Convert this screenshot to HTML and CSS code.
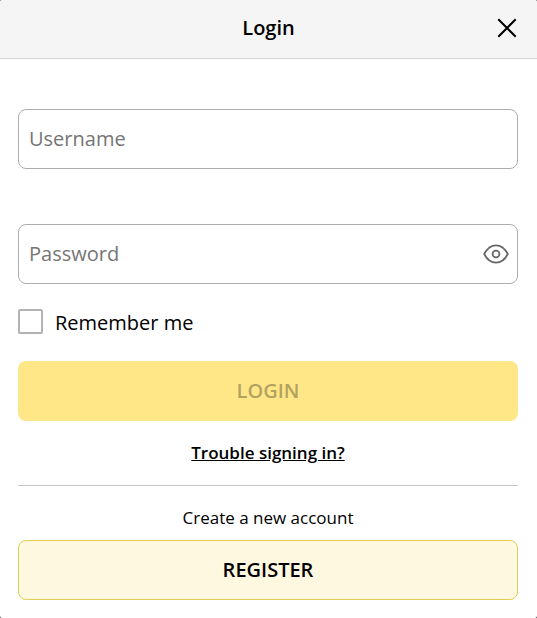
FILE: index.html
```html
<!DOCTYPE html>
<html lang="en">

<head>
  <meta charset="UTF-8">
  <meta name="viewport" content="width=device-width, initial-scale=1.0">
  <title>Login</title>
  <link rel="stylesheet" href="styles.css">
</head>

<body>
  <div class="modal">
    <!-- Header -->
    <header class="modal-header">
      <h1>Login</h1>
      <button class="close-modal" type="button" aria-label="Close">
        <svg width="20" height="20" viewBox="0 0 20 20" fill="none" stroke="#000000" stroke-width="2">
          <path d="M1.3 1.3 18.7 18.7M18.7 1.3 1.3 18.7" />
        </svg>
      </button>
    </header>

    <!-- Login form -->
    <form class="login-form" onsubmit="return false;">
      <div class="form-group">
        <input type="text" id="username" placeholder="Username" aria-label="Username">
      </div>
      <div class="form-group">
        <input type="password" id="password" placeholder="Password" aria-label="Password">
        <button class="toggle-password" type="button" aria-label="Show password">
          <svg width="26" height="20" viewBox="0 0 26 20" fill="none" stroke="#666666" stroke-width="1.8">
            <path d="M1.2 10C4.2 4.3 8.3 1.3 13 1.3S21.8 4.3 24.8 10C21.8 15.7 17.7 18.7 13 18.7S4.2 15.7 1.2 10Z" stroke-linejoin="round" />
            <circle cx="13" cy="10" r="3.4" />
          </svg>
        </button>
      </div>
      <div class="remember">
        <input type="checkbox" id="remember">
        <label for="remember">Remember me</label>
      </div>
      <button class="btn btn-login" type="submit" disabled>LOGIN</button>
      <a class="trouble" href="#">Trouble signing in?</a>
    </form>

    <!-- Register -->
    <div class="register">
      <p>Create a new account</p>
      <button class="btn btn-register" type="button">REGISTER</button>
    </div>
  </div>
</body>

</html>
```
FILE: styles.css
```css
* {
  box-sizing: border-box;
}

body {
  margin: 0;
  font-family: "Open Sans", "Noto Sans", sans-serif;
  color: #000000;
  background-color: #333333;
}

.modal {
  min-height: 100vh;
  background-color: #ffffff;
  border-radius: 2px;
  overflow: hidden;
}

/* Header */
.modal-header {
  position: relative;
  display: flex;
  justify-content: center;
  align-items: center;
  height: 59px;
  padding-bottom: 4px;
  background-color: #f5f5f5;
  border-bottom: 1px solid #d6d6d6;
}

.modal-header h1 {
  margin: 0;
  font-size: 20px;
  font-weight: 600;
}

.close-modal {
  position: absolute;
  top: 18px;
  right: 20px;
  display: flex;
  padding: 0;
  background: none;
  border: none;
  cursor: pointer;
}

/* Form */
.login-form {
  display: flex;
  flex-direction: column;
  margin: 0 19px 0 18px;
  padding: 50px 0 20px;
  border-bottom: 1px solid #c8c8c8;
}

.form-group {
  position: relative;
  margin-bottom: 55px;
}

.form-group input {
  display: block;
  width: 100%;
  height: 60px;
  padding: 0 10px 2px;
  border: 1px solid #adadad;
  border-radius: 8px;
  background-color: #ffffff;
  font-family: inherit;
  font-size: 20px;
}

.form-group input::placeholder {
  color: #757575;
}

.toggle-password {
  position: absolute;
  top: 20px;
  right: 9px;
  display: flex;
  padding: 0;
  background: none;
  border: none;
  cursor: pointer;
}

.remember {
  display: flex;
  align-items: flex-start;
  gap: 12px;
  margin-top: -30px;
  margin-bottom: 25px;
  font-size: 20px;
  line-height: 27px;
}

.remember input {
  appearance: none;
  width: 25px;
  height: 25px;
  margin: 0;
  border: 2px solid #b3b3b3;
  border-radius: 2px;
  background-color: #ffffff;
}

.remember input:checked {
  background-color: #ffe788;
}

/* Buttons */
.btn {
  width: 100%;
  height: 60px;
  padding: 0 0 2px;
  border: none;
  border-radius: 8px;
  font-family: inherit;
  font-size: 20px;
  font-weight: 600;
  cursor: pointer;
}

.btn-login {
  background-color: #ffe788;
  color: #b3a25f;
}

.btn-register {
  background-color: #fff8e1;
  border: 1px solid #e0cf50;
  color: #000000;
}

.trouble {
  align-self: center;
  margin-top: 20px;
  color: #000000;
  font-size: 17px;
  font-weight: 600;
  line-height: 24px;
}

/* Register */
.register {
  margin: 0 19px 0 18px;
  padding: 20px 0 18px;
  text-align: center;
}

.register p {
  margin: 0 0 10px;
  font-size: 17px;
  line-height: 24px;
}
```
